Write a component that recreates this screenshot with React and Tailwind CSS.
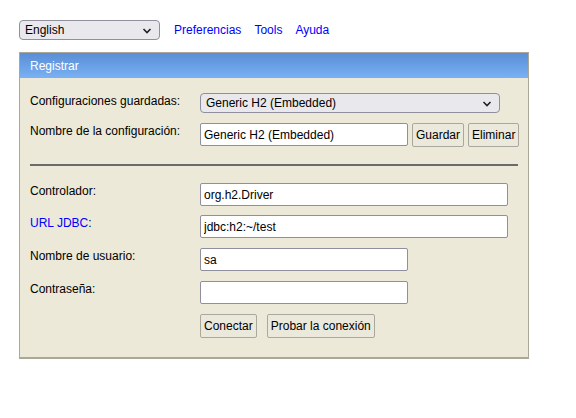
import { useState } from 'react'

const Chevron = () => (
  <svg width="10" height="6" viewBox="0 0 10 6" className="pointer-events-none absolute right-[8px] top-[8px]">
    <path d="M1.5 1 L5 4.5 L8.5 1" fill="none" stroke="#222" strokeWidth="1.6" />
  </svg>
)

const Select = ({ value, options, className }) => (
  <div className={`relative ${className}`}>
    <select
      defaultValue={value}
      className="w-full h-full appearance-none bg-[#e9e9ed] border border-[#8f8f9d] rounded-[4px] pl-[5px] pr-[20px] text-[12px] text-black outline-none"
    >
      {options.map((o) => (
        <option key={o}>{o}</option>
      ))}
    </select>
    <Chevron />
  </div>
)

const Field = ({ value, type = 'text', className }) => (
  <input
    type={type}
    defaultValue={value}
    className={`h-[23px] bg-white border border-[#8f8f9d] rounded-[2px] px-[3px] text-[12px] text-black outline-none ${className}`}
  />
)

const Btn = ({ children }) => (
  <button className="h-[24px] px-[3px] bg-[#ebe8dc] border border-[#aaa89c] rounded-[2px] text-[12px] text-black">
    {children}
  </button>
)

const Row = ({ label, children, className = '' }) => (
  <div className={`flex ${className}`}>
    <div className="w-[180px] shrink-0 whitespace-nowrap pl-[10px] pt-[1px] text-black">{label}</div>
    <div className="flex gap-[4px]">{children}</div>
  </div>
)

export default function App() {
  const [lang] = useState('English')

  return (
    <div className="w-[576px] h-[418px] bg-white font-['Liberation_Sans',Arial,sans-serif] text-[12px] leading-[14px]">
      <div className="flex items-center pl-[19px] pt-[20px] h-[40px]">
        <Select value={lang} options={['English', 'Español', 'Deutsch']} className="w-[141px] h-[20px]" />
        <a href="#" className="ml-[14px] text-[#0000ff]">Preferencias</a>
        <a href="#" className="ml-[13px] text-[#0000ff]">Tools</a>
        <a href="#" className="ml-[13px] text-[#0000ff]">Ayuda</a>
      </div>

      <div className="ml-[19px] mt-[12px] w-[510px] h-[307px] bg-[#ece9d8] border border-[#aca899] border-b-2">
        <div className="h-[25px] pl-[10px] flex items-center text-white bg-gradient-to-b from-[#5a8dd6] to-[#79b2f4]">
          Registrar
        </div>

        <div className="pt-[15px]">
          <Row label="Configuraciones guardadas:">
            <Select value="Generic H2 (Embedded)" options={['Generic H2 (Embedded)', 'Generic H2 (Server)']} className="w-[300px] h-[20px]" />
          </Row>
          <Row label="Nombre de la configuración:" className="mt-[10px]">
            <Field value="Generic H2 (Embedded)" className="w-[208px]" />
            <Btn>Guardar</Btn>
            <Btn>Eliminar</Btn>
          </Row>
          <div className="mx-[10px] mt-[17px] h-[2px] bg-[#6b6b6b]" />

          <Row label="Controlador:" className="mt-[17px]">
            <Field value="org.h2.Driver" className="w-[308px]" />
          </Row>
          <Row
            label={
              <>
                <a href="#" className="text-[#0000ff]">URL JDBC</a>:
              </>
            }
            className="mt-[9px]"
          >
            <Field value="jdbc:h2:~/test" className="w-[308px]" />
          </Row>
          <Row label="Nombre de usuario:" className="mt-[10px]">
            <Field value="sa" className="w-[208px]" />
          </Row>
          <Row label="Contraseña:" className="mt-[10px]">
            <Field type="password" className="w-[208px]" />
          </Row>
          <div className="flex mt-[10px] pl-[180px] gap-[10px]">
            <Btn>Conectar</Btn>
            <Btn>Probar la conexión</Btn>
          </div>
        </div>
      </div>
    </div>
  )
}
